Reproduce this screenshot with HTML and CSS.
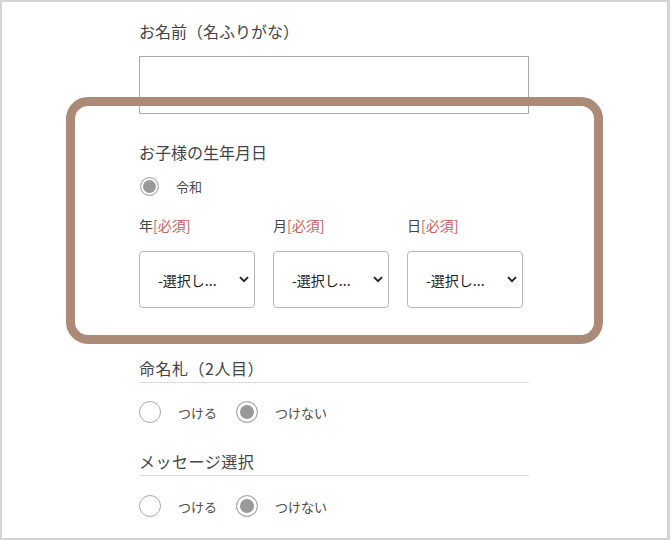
FILE: index.html
```html
<!DOCTYPE html>
<html lang="ja">
<head>
  <meta charset="UTF-8" />
  <title>お申し込みフォーム</title>
  <link rel="stylesheet" href="styles.css">
</head>
<body>
  <div class="pagina">
    <div class="formulario">

      <div class="campo">
        <p class="titulo">お名前（名ふりがな）</p>
        <input class="entrada" type="text">
      </div>

      <div class="campo campo-nasc">
        <p class="titulo">お子様の生年月日</p>
        <div class="radios radios-era">
          <label class="opcao"><input class="radio radio-sm" type="radio" name="era" checked><span>令和</span></label>
        </div>
        <div class="datas">
          <div class="data">
            <p class="rotulo">年<span class="obrig">[必須]</span></p>
            <div class="caixa-select">
              <select><option>-選択し...</option></select>
              <svg class="seta" width="10" height="7" viewBox="0 0 10 7"><path d="M1 1.2 L5 5.2 L9 1.2" fill="none" stroke="#222" stroke-width="1.9"/></svg>
            </div>
          </div>
          <div class="data">
            <p class="rotulo">月<span class="obrig">[必須]</span></p>
            <div class="caixa-select">
              <select><option>-選択し...</option></select>
              <svg class="seta" width="10" height="7" viewBox="0 0 10 7"><path d="M1 1.2 L5 5.2 L9 1.2" fill="none" stroke="#222" stroke-width="1.9"/></svg>
            </div>
          </div>
          <div class="data">
            <p class="rotulo">日<span class="obrig">[必須]</span></p>
            <div class="caixa-select">
              <select><option>-選択し...</option></select>
              <svg class="seta" width="10" height="7" viewBox="0 0 10 7"><path d="M1 1.2 L5 5.2 L9 1.2" fill="none" stroke="#222" stroke-width="1.9"/></svg>
            </div>
          </div>
        </div>
      </div>

      <div class="campo campo-linha">
        <p class="titulo sublinhado">命名札（2人目）</p>
        <div class="radios">
          <label class="opcao"><input class="radio" type="radio" name="nome2"><span>つける</span></label>
          <label class="opcao"><input class="radio" type="radio" name="nome2" checked><span>つけない</span></label>
        </div>
      </div>

      <div class="campo campo-msg">
        <p class="titulo sublinhado">メッセージ選択</p>
        <div class="radios">
          <label class="opcao"><input class="radio" type="radio" name="msg"><span>つける</span></label>
          <label class="opcao"><input class="radio" type="radio" name="msg" checked><span>つけない</span></label>
        </div>
      </div>

    </div>

    <div class="destaque"></div>
  </div>
</body>
</html>
```

FILE: styles.css
```css
body {
  margin: 0;
  background: #fff;
  font-family: "Noto Sans CJK JP", "Noto Sans", sans-serif;
  color: #444;
}

.pagina {
  position: relative;
  width: 670px;
  height: 540px;
  box-sizing: border-box;
  border: 2px solid #d5d5d5;
  border-right-width: 3px;
  overflow: hidden;
}

.formulario {
  width: 390px;
  padding: 17px 0 0 137px;
}

.campo p {
  margin: 0;
}

.titulo {
  font-size: 16px;
  line-height: 24px;
  color: #444;
}

.sublinhado {
  padding-bottom: 2px;
  border-bottom: 1px solid #dcdcdc;
  letter-spacing: 0.5px;
}

.entrada {
  display: block;
  width: 100%;
  height: 58px;
  margin-top: 13px;
  box-sizing: border-box;
  border: 1px solid #aaa;
  border-radius: 0;
  outline: none;
}

/* data de nascimento */
.campo-nasc {
  margin-top: 26px;
}

.radios {
  display: flex;
  align-items: center;
  height: 22px;
  margin-top: 18px;
}

.radios-era {
  height: 20px;
  margin-top: 12px;
}

.opcao {
  display: flex;
  align-items: center;
  gap: 17px;
  margin-right: 19px;
  font-size: 13px;
  color: #4a4a4a;
}

.radio {
  appearance: none;
  -webkit-appearance: none;
  width: 22px;
  height: 22px;
  margin: 0;
  border: 1px solid #aaa;
  border-radius: 50%;
  background: #fff;
  box-sizing: border-box;
}

.radio:checked {
  background: #999;
  box-shadow: inset 0 0 0 3px #fff;
}

.radio-sm {
  width: 19px;
  height: 19px;
  margin-left: 1px;
}

.radio-sm:checked {
  box-shadow: inset 0 0 0 2px #fff;
}

.datas {
  display: flex;
  gap: 18px;
  margin-top: 19px;
}

.data {
  width: 116px;
}

.rotulo {
  font-size: 14px;
  line-height: 20px;
  color: #444;
}

.obrig {
  color: #c8605a;
}

.caixa-select {
  position: relative;
  margin-top: 16px;
}

.caixa-select select {
  appearance: none;
  -webkit-appearance: none;
  display: block;
  width: 116px;
  height: 57px;
  padding: 0 0 0 18px;
  border: 1px solid #b8b8b8;
  border-radius: 4px;
  background: #fff;
  font-family: "Noto Sans CJK JP", sans-serif;
  font-size: 14px;
  color: #222;
}

.seta {
  position: absolute;
  left: 100px;
  top: 25px;
  pointer-events: none;
}

.campo-linha {
  margin-top: 48px;
}

.campo-msg {
  margin-top: 26px;
}

.campo-msg .radios {
  margin-top: 19px;
}

/* moldura de destaque sobre o formulario */
.destaque {
  position: absolute;
  left: 64px;
  top: 95px;
  width: 537px;
  height: 247px;
  box-sizing: border-box;
  border: 9px solid #ab8a78;
  border-radius: 22px;
  pointer-events: none;
}
```
